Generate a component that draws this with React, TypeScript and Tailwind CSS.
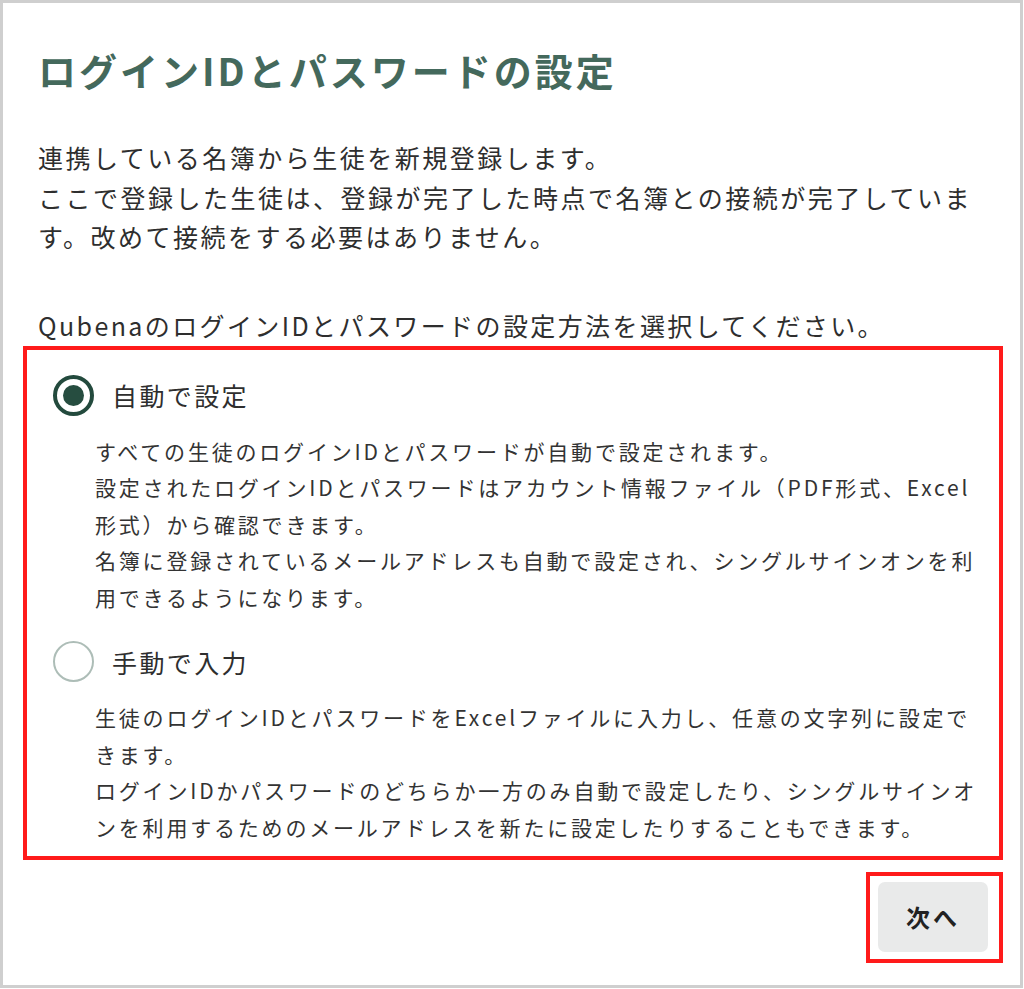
const jp = { fontFamily: '"Noto Sans CJK JP", "Noto Sans", sans-serif' }

const autoLines = [
  "すべての生徒のログインIDとパスワードが自動で設定されます。",
  "設定されたログインIDとパスワードはアカウント情報ファイル（PDF形式、Excel",
  "形式）から確認できます。",
  "名簿に登録されているメールアドレスも自動で設定され、シングルサインオンを利",
  "用できるようになります。",
]

const manualLines = [
  "生徒のログインIDとパスワードをExcelファイルに入力し、任意の文字列に設定で",
  "きます。",
  "ログインIDかパスワードのどちらか一方のみ自動で設定したり、シングルサインオ",
  "ンを利用するためのメールアドレスを新たに設定したりすることもできます。",
]

function Radio({ checked }: { checked: boolean }) {
  return checked ? (
    <span className="flex h-[41px] w-[41px] shrink-0 items-center justify-center rounded-full border-[4px] border-[#234a3d]">
      <span className="h-[21px] w-[21px] rounded-full bg-[#264d40]" />
    </span>
  ) : (
    <span className="h-[41px] w-[41px] shrink-0 rounded-full border-2 border-[#adbdb7]" />
  )
}

function Option({
  checked,
  label,
  lines,
  className,
}: {
  checked: boolean
  label: string
  lines: string[]
  className?: string
}) {
  return (
    <div className={className}>
      <label className="flex items-center gap-[18px] pl-[26px]">
        <Radio checked={checked} />
        <span className="text-[25px] leading-[36px] tracking-[2.4px] text-[#2e2e2e]">{label}</span>
      </label>
      {/* description */}
      <div className="mt-[17px] pl-[68px] text-[21px] leading-[36.5px] tracking-[2.8px] text-[#333333]">
        {lines.map((l) => (
          <div key={l} className="whitespace-nowrap">
            {l}
          </div>
        ))}
      </div>
    </div>
  )
}

export default function App() {
  const [mode] = [true]

  return (
    <div className="h-[989px] w-[1024px] overflow-hidden bg-white" style={jp}>
      <div className="flex h-[988px] w-[1023px] flex-col border-[3px] border-[#cfcfcf] px-[35px] pt-[42px]">
        <h1 className="whitespace-nowrap text-[38px] font-semibold leading-[50px] tracking-[3px] text-[#44695c]">
          ログインIDとパスワードの設定
        </h1>

        <div className="mt-[43px] text-[25px] leading-[39.5px] tracking-[2.5px] text-[#2e2e2e]">
          <div className="whitespace-nowrap">連携している名簿から生徒を新規登録します。</div>
          <div className="whitespace-nowrap">
            ここで登録した生徒は、登録が完了した時点で名簿との接続が完了していま
          </div>
          <div className="whitespace-nowrap">す。改めて接続をする必要はありません。</div>
        </div>

        <p className="mt-[49.5px] whitespace-nowrap text-[25px] leading-[39.5px] tracking-[2.4px] text-[#2e2e2e]">
          QubenaのログインIDとパスワードの設定方法を選択してください。
        </p>

        {/* options */}
        <div className="-ml-[15px] -mr-[18px] border-4 border-[#ff1a1a] pb-[11px] pt-[25px]">
          <Option checked={mode} label="自動で設定" lines={autoLines} />
          <Option checked={!mode} label="手動で入力" lines={manualLines} className="mt-[26px]" />
        </div>

        <div className="-mr-[18px] mt-[12px] self-end border-4 border-[#ff1a1a] pb-[7px] pl-[8px] pr-[11px] pt-[6px]">
          <button className="flex h-[70px] w-[110px] items-center justify-center rounded-[7px] bg-[#e9eaea] text-[24px] font-bold tracking-[3px] text-[#222222]">
            次へ
          </button>
        </div>
      </div>
    </div>
  )
}
